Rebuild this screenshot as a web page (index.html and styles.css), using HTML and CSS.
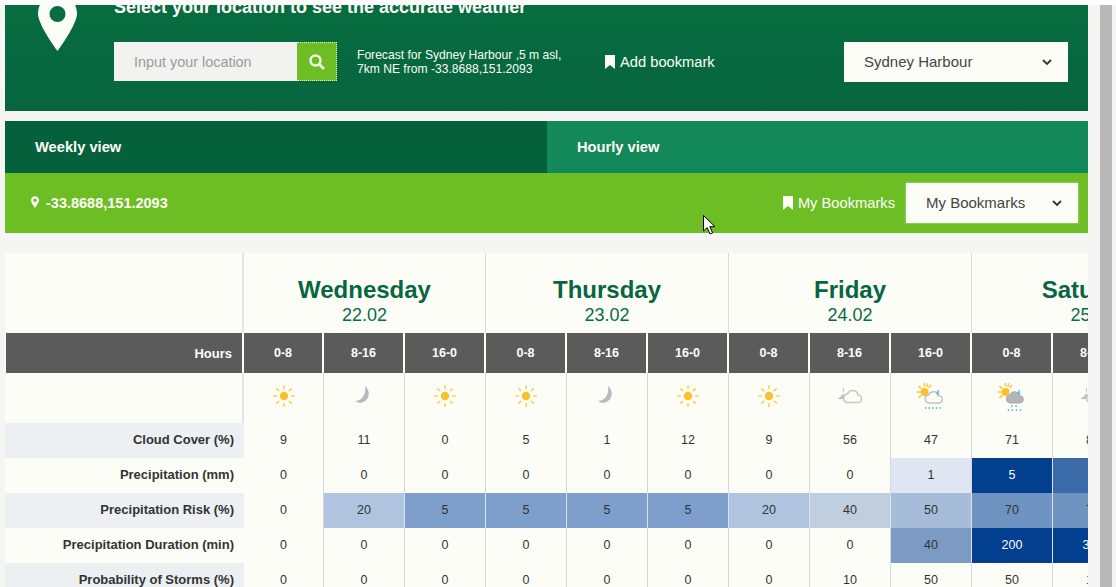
FILE: index.html
```html
<!doctype html>
<html lang="en">
<head>
  <meta charset="UTF-8">
  <meta name="viewport" content="width=device-width, initial-scale=1.0">
  <title>Weather forecast</title>
  <link rel="stylesheet" href="styles.css">
</head>
<body>
  <svg class="icon-defs" aria-hidden="true">
    <symbol id="sun" viewBox="0 0 32 32">
      <circle cx="16" cy="16" r="4.200" fill="#fbc02d"/>
      <g stroke="#f8d458" stroke-width="1.700" stroke-linecap="round">
        <path d="M16 5.800v2.600M16 23.600v2.600M5.800 16h2.600M23.600 16h2.600M8.800 8.800l1.800 1.800M21.400 21.400l1.800 1.800M8.800 23.200l1.800-1.800M21.400 10.600l1.800-1.800"/>
      </g>
    </symbol>
    <symbol id="moon" viewBox="0 0 32 32">
      <path d="M17 6C22.500 10 22.500 20 14 22.500 11.500 23.200 9 22.500 7 21 13 21 18.500 15 17 6Z" fill="#b8b8c2"/>
    </symbol>
    <symbol id="moon-cloud" viewBox="0 0 32 32">
      <path d="M10 7C8 10 8.500 15 12 17.500 9 19.500 6 19.500 3.500 18.500 7 17.500 10.500 13 10 7Z" fill="#bcbcc4"/>
      <path d="M13 22.500h10.500a3.800 3.800 0 0 0 .5-7.600 5.500 5.500 0 0 0-10.500-1 4.400 4.400 0 0 0-.5 8.600Z" fill="#fdfdf8" stroke="#c6c6c6" stroke-width="1.500"/>
    </symbol>
    <symbol id="sun-cloud" viewBox="0 0 32 32">
      <circle cx="9.500" cy="12" r="4" fill="#fbc02d"/>
      <path d="M9.500 3.500v2.500M2.500 12h2.500M4 6.500l1.700 1.700M4 17.500l1.700-1.700M15.500 5.500l-1.300 1.700M12.800 4l-.7 2" stroke="#f7c93e" stroke-width="1.700" stroke-linecap="round"/>
      <path d="M13.500 23h10a3.600 3.600 0 0 0 .5-7.200 5.500 5.500 0 0 0-10.300-1 4.200 4.200 0 0 0-.2 8.200Z" fill="#fdfdf8" stroke="#c2c2c2" stroke-width="1.500"/>
      <path d="M23 10l-2.500 4h2l-1.500 3.500 4-5h-2l1.500-2.500Z" fill="#6db8dc"/>
      <path d="M10 28h1.400M13.600 28h1.400M17.200 28h1.400M20.800 28h1.400M24.400 28h1.400" stroke="#7fb8d8" stroke-width="2"/>
    </symbol>
    <symbol id="sun-storm" viewBox="0 0 32 32">
      <circle cx="9.500" cy="12" r="4" fill="#fbc02d"/>
      <path d="M9.500 3.500v2.500M2.500 12h2.500M4 6.500l1.700 1.700M4 17.500l1.700-1.700M15.500 5.500l-1.300 1.700M12.800 4l-.7 2" stroke="#f7c93e" stroke-width="1.700" stroke-linecap="round"/>
      <path d="M13.500 23h10a3.600 3.600 0 0 0 .5-7.200 5.500 5.500 0 0 0-10.300-1 4.200 4.200 0 0 0-.2 8.200Z" fill="#b5b5b5" stroke="#a9a9a9"/>
      <path d="M23 10l-2.500 4h2l-1.500 3.500 4-5h-2l1.500-2.500Z" fill="#6db8dc"/>
      <path d="M16 25v2M20 25v2M12.500 29v2M16.500 29v2M20.500 29v2M24.500 29v2" stroke="#7fb8d8" stroke-width="1.500"/>
    </symbol>
    <symbol id="bookmark" viewBox="0 0 10 14">
      <path d="M0 0h10v14L5 10 0 14Z" fill="currentColor"/>
    </symbol>
    <symbol id="chevron" viewBox="0 0 10 6">
      <path d="M1 1l4 4 4-4" fill="none" stroke="currentColor" stroke-width="1.800"/>
    </symbol>
  </svg>

  <div class="top-strip"></div>

  <div class="page">
    <main class="content">

      <section class="location">
        <svg class="big-pin" viewBox="0 0 39 57">
          <path fill-rule="evenodd" d="M19.500 0C8.700 0 0 8.700 0 19.500 0 29 13 48 19.500 57 26 48 39 29 39 19.500 39 8.700 30.300 0 19.500 0ZM19.500 12a8 8 0 1 1 0 16 8 8 0 0 1 0-16Z" fill="#fdfdf8"/>
        </svg>
        <div class="location-main">
          <h2 class="location-title">Select your location to see the accurate weather</h2>
          <div class="location-row">
            <div class="search">
              <input class="search-input" type="text" placeholder="Input your location">
              <button class="search-btn" aria-label="Search">
                <svg viewBox="0 0 18 18" width="18" height="18">
                  <circle cx="7.500" cy="7.500" r="5" fill="none" stroke="#f4f6e4" stroke-width="2.400"/>
                  <path d="M11.500 11.500l4.500 4.500" stroke="#f4f6e4" stroke-width="2.600"/>
                </svg>
              </button>
            </div>
            <p class="forecast-for">Forecast for Sydney Harbour ,5 m asl,<br>7km NE from -33.8688,151.2093</p>
            <a class="bookmark-link add-bookmark"><svg class="bookmark-icon"><use href="#bookmark"/></svg>Add bookmark</a>
            <div class="dropdown dropdown-place">Sydney Harbour<svg class="chevron"><use href="#chevron"/></svg></div>
          </div>
        </div>
      </section>

      <nav class="tabs">
        <a class="tab tab-weekly">Weekly view</a>
        <a class="tab tab-hourly">Hourly view</a>
      </nav>

      <div class="coords-bar">
        <svg class="small-pin" viewBox="0 0 39 57">
          <path fill-rule="evenodd" d="M19.500 0C8.700 0 0 8.700 0 19.500 0 29 13 48 19.500 57 26 48 39 29 39 19.500 39 8.700 30.300 0 19.500 0ZM19.500 11a8.500 8.500 0 1 1 0 17 8.500 8.500 0 0 1 0-17Z" fill="#fdfdf8"/>
        </svg>
        <strong class="coords">-33.8688,151.2093</strong>
        <a class="bookmark-link my-bookmarks"><svg class="bookmark-icon"><use href="#bookmark"/></svg>My Bookmarks</a>
        <div class="dropdown dropdown-bookmarks">My Bookmarks<svg class="chevron"><use href="#chevron"/></svg></div>
      </div>

      <div class="table-wrap">
        <table class="forecast">
          <colgroup>
            <col class="col-label">
            <col class="col-first"><col class="col-hour"><col class="col-hour">
            <col class="col-hour"><col class="col-hour"><col class="col-hour">
            <col class="col-hour"><col class="col-hour"><col class="col-hour">
            <col class="col-hour"><col class="col-hour"><col class="col-hour">
          </colgroup>
          <thead>
            <tr class="days">
              <th class="label-empty"></th>
              <th colspan="3"><span class="day">Wednesday</span><span class="date">22.02</span></th>
              <th colspan="3"><span class="day">Thursday</span><span class="date">23.02</span></th>
              <th colspan="3"><span class="day">Friday</span><span class="date">24.02</span></th>
              <th colspan="3"><span class="day">Saturday</span><span class="date">25.02</span></th>
            </tr>
            <tr class="hours">
              <th class="label">Hours</th>
              <th>0-8</th><th>8-16</th><th>16-0</th>
              <th>0-8</th><th>8-16</th><th>16-0</th>
              <th>0-8</th><th>8-16</th><th>16-0</th>
              <th>0-8</th><th>8-16</th><th>16-0</th>
            </tr>
          </thead>
          <tbody>
            <tr class="icons">
              <th class="label-empty"></th>
              <td><svg class="wx"><use href="#sun"/></svg></td>
              <td><svg class="wx"><use href="#moon"/></svg></td>
              <td><svg class="wx"><use href="#sun"/></svg></td>
              <td><svg class="wx"><use href="#sun"/></svg></td>
              <td><svg class="wx"><use href="#moon"/></svg></td>
              <td><svg class="wx"><use href="#sun"/></svg></td>
              <td><svg class="wx"><use href="#sun"/></svg></td>
              <td><svg class="wx"><use href="#moon-cloud"/></svg></td>
              <td><svg class="wx"><use href="#sun-cloud"/></svg></td>
              <td><svg class="wx"><use href="#sun-storm"/></svg></td>
              <td><svg class="wx"><use href="#moon-cloud"/></svg></td>
              <td><svg class="wx"><use href="#moon"/></svg></td>
            </tr>
            <tr class="odd">
              <th class="label">Cloud Cover (%)</th>
              <td>9</td><td>11</td><td>0</td><td>5</td><td>1</td><td>12</td><td>9</td><td>56</td><td>47</td><td>71</td><td>81</td><td>20</td>
            </tr>
            <tr>
              <th class="label">Precipitation (mm)</th>
              <td>0</td><td>0</td><td>0</td><td>0</td><td>0</td><td>0</td><td>0</td><td>0</td><td class="pr-1">1</td><td class="pr-5">5</td><td class="pr-3">1</td><td>0</td>
            </tr>
            <tr class="odd">
              <th class="label">Precipitation Risk (%)</th>
              <td>0</td><td class="rk-20">20</td><td class="rk-5">5</td><td class="rk-5">5</td><td class="rk-5">5</td><td class="rk-5">5</td><td class="rk-20">20</td><td class="rk-40">40</td><td class="rk-50">50</td><td class="rk-70">70</td><td class="rk-70">70</td><td>0</td>
            </tr>
            <tr>
              <th class="label">Precipitation Duration (min)</th>
              <td>0</td><td>0</td><td>0</td><td>0</td><td>0</td><td>0</td><td>0</td><td>0</td><td class="dr-40">40</td><td class="pr-5">200</td><td class="pr-5">300</td><td>0</td>
            </tr>
            <tr class="odd">
              <th class="label">Probability of Storms (%)</th>
              <td>0</td><td>0</td><td>0</td><td>0</td><td>0</td><td>0</td><td>0</td><td>10</td><td>50</td><td>50</td><td>10</td><td>0</td>
            </tr>
          </tbody>
        </table>
      </div>

    </main>
    <div class="scroll-track"></div>
  </div>

  <svg class="cursor" viewBox="0 0 13 20" width="13" height="20">
    <path d="M.5.5v15.500l3.700-3.400 2.800 6.400 2.600-1.100-2.800-6.200h5.200Z" fill="#fff" stroke="#000"/>
  </svg>
</body>
</html>
```

FILE: styles.css
```css
* {
    box-sizing: border-box;
}

html, body {
    margin: 0;
    height: 587px;
    overflow: hidden;
}

body {
    position: relative;
    font-family: "Liberation Sans", Arial, sans-serif;
    font-size: 14px;
    color: #333;
    background: #f5f6f3;
}

.icon-defs {
    position: absolute;
    width: 0;
    height: 0;
}

.top-strip {
    position: absolute;
    top: 0;
    left: 0;
    width: 100%;
    height: 5px;
    background: #fdfdfb;
    z-index: 3;
}

.cursor {
    position: absolute;
    top: 215px;
    left: 703px;
    z-index: 4;
}

.page {
    display: flex;
    height: 587px;
}

.content {
    width: 1083px;
    margin-left: 5px;
    flex: none;
}

.scroll-track {
    width: 12px;
    margin-left: 12px;
    background: #b9b9bb;
}

/* location panel, scrolled partly out of view */
.location {
    display: flex;
    margin-top: -16px;
    padding: 10px 20px 29px 33px;
    background: linear-gradient(to bottom, #076e41, #07653e);
    color: #fdfdf8;
}

.big-pin {
    width: 39px;
    height: 57px;
    flex: none;
    margin-right: 37px;
}

.location-main {
    flex: 1;
    padding-top: 3px;
}

.location-title {
    margin: 0 0 25px;
    font-size: 18px;
    line-height: 20px;
    font-weight: bold;
}

.location-row {
    display: flex;
    align-items: flex-start;
}

.search {
    display: flex;
    width: 223px;
    height: 39px;
}

.search-input {
    width: 183px;
    height: 39px;
    padding: 0 20px;
    border: none;
    background: #f2f2f0;
    font-family: inherit;
    font-size: 14.4px;
}

.search-input::placeholder {
    color: #9b9b9b;
    opacity: 1;
}

.search-btn {
    display: flex;
    align-items: center;
    justify-content: center;
    width: 40px;
    height: 39px;
    padding: 0;
    background: #6dbe25;
    border: 1px dotted #e8f2d8;
    border-left: none;
}

.forecast-for {
    width: 248px;
    margin: 6px 0 0 20px;
    font-size: 12.1px;
    line-height: 14px;
}

.bookmark-link {
    display: flex;
    align-items: center;
    font-size: 14.7px;
}

.bookmark-icon {
    width: 10px;
    height: 14px;
    margin-right: 5px;
    color: #fdfdf8;
}

.add-bookmark {
    height: 39px;
}

.dropdown {
    display: flex;
    align-items: center;
    justify-content: space-between;
    height: 40px;
    padding: 0 16px 2px 20px;
    background: #fdfdf8;
    color: #444;
    font-size: 15px;
}

.dropdown .chevron {
    margin-top: 2px;
}

.dropdown-place {
    width: 224px;
    margin-left: auto;
}

.dropdown-bookmarks {
    width: 172px;
    box-shadow: 0 0 2px rgba(255, 255, 255, 0.6);
}

.chevron {
    width: 10px;
    height: 6px;
    color: #333;
}

.tabs {
    display: flex;
    margin-top: 10px;
}

.tab {
    height: 52px;
    padding: 0 30px;
    color: #fdfdf8;
    font-size: 14.7px;
    font-weight: bold;
    line-height: 52px;
}

.tab-weekly {
    width: 542px;
    background: #05603c;
}

.tab-hourly {
    flex: 1;
    background: #138858;
}

.coords-bar {
    display: flex;
    align-items: center;
    height: 60px;
    padding: 0 10px 0 26px;
    background: #6dbe25;
    color: #fdfdf8;
}

.small-pin {
    width: 8px;
    height: 12px;
    margin: -2px 7px 0 0;
}

.coords {
    font-size: 14.5px;
    font-weight: bold;
}

.my-bookmarks {
    margin-left: auto;
    margin-right: 11px;
}

/* forecast table */
.table-wrap {
    margin-top: 20px;
    height: 334px;
    overflow: hidden;
    background: #fdfdf8;
}

.forecast {
    table-layout: fixed;
    width: 1210px;
    border-collapse: separate;
    border-spacing: 0;
    font-size: 12.5px;
}

.col-label {
    width: 239px;
}

.col-first {
    width: 80px;
}

.col-hour {
    width: 81px;
}

.forecast th, .forecast td {
    padding: 0;
    text-align: center;
}

.forecast th.label, .forecast th.label-empty {
    padding-right: 10px;
    text-align: right;
    font-size: 13px;
    font-weight: bold;
    color: #333;
}

.days th {
    height: 80px;
    padding-top: 24px;
    vertical-align: top;
    border-right: 1px solid #d9dbde;
}

.days th.label-empty {
    border-right: 2px solid #e3e4e6;
}

.day {
    display: block;
    font-size: 24px;
    line-height: 26px;
    font-weight: bold;
    color: #07663f;
}

.date {
    display: block;
    margin-top: 1px;
    font-size: 18px;
    line-height: 22px;
    font-weight: normal;
    color: #0a6b45;
}

.hours th {
    height: 40px;
    background: #5b5b5b;
    border-right: 2px solid #fdfdf8;
    color: #fdfdf8;
    font-size: 12.5px;
}

.forecast .hours th.label {
    border-left: 1px solid #fdfdf8;
    color: #fdfdf8;
}

.icons td {
    height: 50px;
    padding-top: 7px;
    vertical-align: top;
    border-right: 1px solid #d6d8dc;
}

.icons th.label-empty {
    border-right: 2px solid #e3e4e6;
}

.wx {
    display: block;
    width: 32px;
    height: 32px;
    margin: 0 auto;
}

tbody td {
    height: 35px;
    border-right: 1px solid #d6d8dc;
    color: #333;
}

.forecast tbody td, .forecast tbody th.label {
    padding-bottom: 2px;
}

.forecast .icons td {
    padding-bottom: 0;
}

.odd .label {
    background: #edf0f2;
}

/* heat colours */
.rk-20 { background: #b0c4df; border-right-color: #dbe3ee; }
.rk-5 { background: #7e9fcb; border-right-color: #dbe3ee; }
.rk-40 { background: #c0cfdf; border-right-color: #dbe3ee; }
.rk-50 { background: #a7bcd8; border-right-color: #dbe3ee; }
.rk-70 { background: #6f93c0; border-right-color: #dbe3ee; }
.dr-40 { background: #7b9ac4; border-right-color: #dbe3ee; }
.pr-1 { background: #dfe6f2; }
.pr-3 { background: #3a6ba8; color: #fdfdf8; }
.forecast .pr-5 { background: #02408f; color: #fdfdf8; border-right-color: #dbe3ee; }
```
